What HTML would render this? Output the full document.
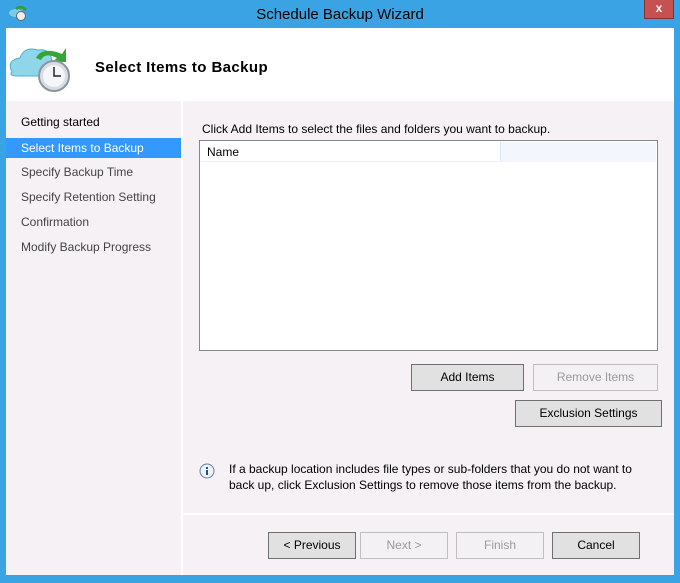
<!DOCTYPE html>
<html><head><meta charset="utf-8"><style>
*{margin:0;padding:0;box-sizing:border-box}
body{width:680px;height:583px;background:#3aa3e3;position:relative;overflow:hidden;font-family:"Liberation Sans",sans-serif;font-size:12px;color:#000}
.a{position:absolute}
.t{white-space:nowrap}
.btn{position:absolute;height:27px;border:1px solid #707070;background:#e1e1e1;text-align:center;line-height:25px;font-size:12px}
.dis{border-color:#bfbfbf;background:#f4f1f5;color:#9a9a9a}
.nav{position:absolute;left:6px;width:175px;height:20px;line-height:20px;padding-left:15px;color:#444;font-size:12px}
</style></head><body>
<div class="a t" style="left:0;top:6px;width:680px;text-align:center;font-size:15px;color:#000">Schedule Backup Wizard</div>
<div class="a" style="left:644px;top:0;width:30px;height:19px;background:#c75050;border:1px solid #8a3030;border-top:none;color:#fff;text-align:center;font-weight:bold;font-size:12px;line-height:17px">x</div>
<svg class="a" style="left:8px;top:4px" width="20" height="18"><ellipse cx="8" cy="9" rx="7" ry="4" fill="#7ccde0"/><path d="M8 5 q5-4 10 1" stroke="#3a9a2a" stroke-width="2.5" fill="none"/><circle cx="13" cy="12" r="4.5" fill="#eee" stroke="#666"/></svg>
<div class="a" style="left:6px;top:28px;width:668px;height:547px;background:#f5f1f5"></div>
<div class="a" style="left:6px;top:28px;width:668px;height:73px;background:#fff"></div>
<svg class="a" style="left:6px;top:36px" width="68" height="60">
<path d="M6 36 q-6-12 8-14 q4-12 18-8 q14-2 14 14 q4 10-8 12 h-26 q-10 0-6-4z" fill="#8fd6ea" stroke="#4fb0cf"/>
<path d="M30 22 q6-12 26-4 l4-6 v14 h-14 l5-4 q-12-6-16 2z" fill="#36a436"/>
<circle cx="48" cy="40" r="15" fill="#d8dde4" stroke="#8a95a3" stroke-width="2"/><circle cx="48" cy="40" r="11" fill="#f4f6f8"/>
<path d="M48 31 v9 h7" stroke="#223" stroke-width="1.5" fill="none"/></svg>
<div class="a t" style="left:95px;top:59px;font-size:15px;font-weight:bold;letter-spacing:0.4px">Select Items to Backup</div>
<div class="a" style="left:181px;top:101px;width:2px;height:474px;background:#fff"></div>
<div class="a" style="left:183px;top:513px;width:491px;height:2px;background:#fff"></div>
<div class="nav t" style="top:112px;color:#000">Getting started</div>
<div class="nav t" style="top:138px;background:#3399ff;color:#fff">Select Items to Backup</div>
<div class="nav t" style="top:162px">Specify Backup Time</div>
<div class="nav t" style="top:187px">Specify Retention Setting</div>
<div class="nav t" style="top:212px">Confirmation</div>
<div class="nav t" style="top:237px">Modify Backup Progress</div>
<div class="a t" style="left:202px;top:122px">Click Add Items to select the files and folders you want to backup.</div>
<div class="a" style="left:199px;top:140px;width:459px;height:211px;background:#fff;border:1px solid #828790">
<div class="a" style="left:1px;top:1px;width:455px;height:20px;background:#f4f6fd"></div>
<div class="a t" style="left:1px;top:1px;width:300px;height:20px;background:#fff;border-right:1px solid #dbe9f4;border-bottom:1px solid #f0f0f0;padding-left:6px;line-height:20px">Name</div>
</div>
<div class="btn" style="left:411px;top:364px;width:113px">Add Items</div>
<div class="btn dis" style="left:533px;top:364px;width:125px">Remove Items</div>
<div class="btn" style="left:515px;top:400px;width:147px">Exclusion Settings</div>
<svg class="a" style="left:199px;top:463px" width="16" height="16"><circle cx="8" cy="8" r="7" fill="#eef3fb" stroke="#5f7fa8"/><rect x="7" y="7" width="2" height="5" fill="#1f4f8f"/><rect x="7" y="4" width="2" height="2" fill="#1f4f8f"/></svg>
<div class="a" style="left:229px;top:461px;line-height:16px">If a backup location includes file types or sub-folders that you do not want to<br>back up, click Exclusion Settings to remove those items from the backup.</div>
<div class="btn" style="left:268px;top:532px;width:88px">&lt; Previous</div>
<div class="btn dis" style="left:360px;top:532px;width:88px">Next &gt;</div>
<div class="btn dis" style="left:456px;top:532px;width:88px">Finish</div>
<div class="btn" style="left:552px;top:532px;width:88px">Cancel</div>
</body></html>
